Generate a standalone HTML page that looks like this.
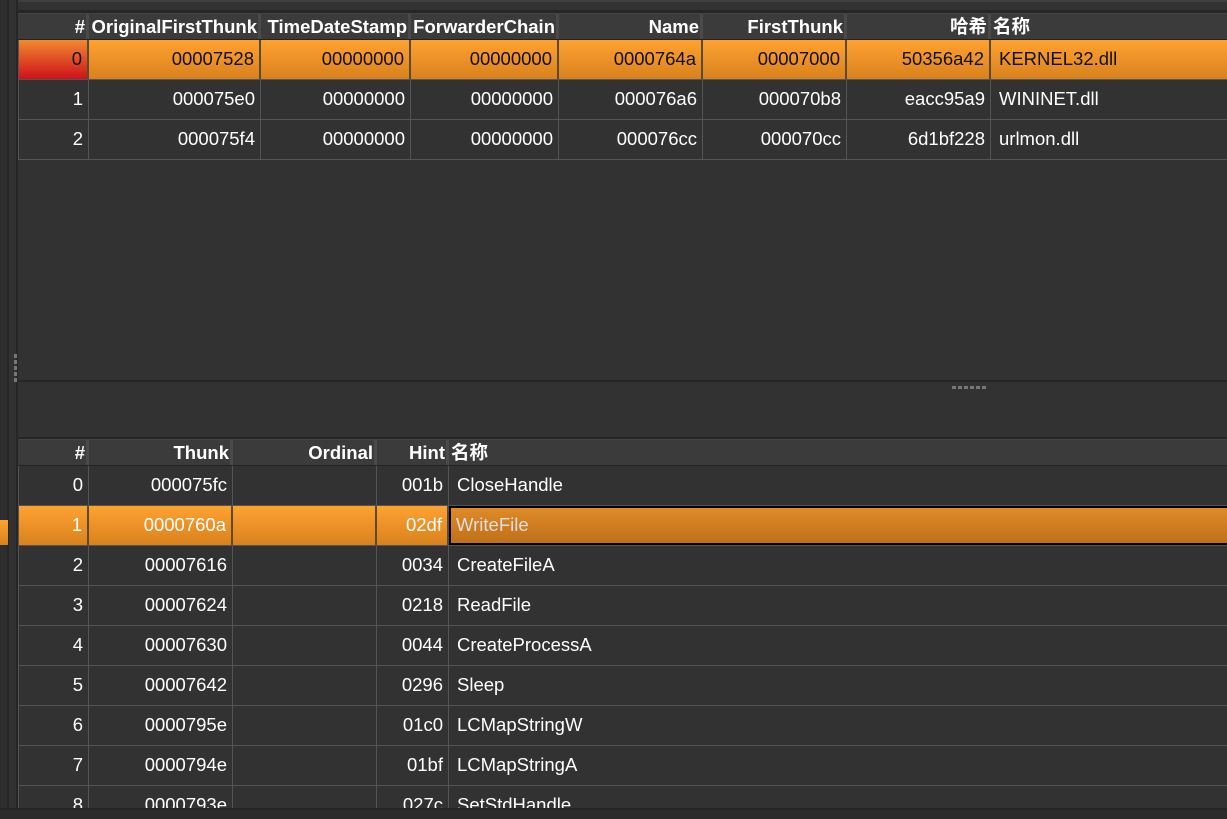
<!DOCTYPE html>
<html style="overflow:hidden;width:1227px;height:819px"><head><meta charset="utf-8"><style>
*{margin:0;padding:0;box-sizing:border-box}
body{width:1227px;height:819px;background:#323232;position:relative;overflow:hidden;font-family:"Liberation Sans","Noto Sans CJK SC",sans-serif;font-size:18.5px;color:#fff}
.a{position:absolute}
.hd{position:absolute;height:26px;background:#3b3b3b;font-weight:bold;font-size:18.5px;line-height:26px;border-top:1px solid #444}
.hc{position:absolute;top:0;height:26px;text-align:right;padding-right:1px;white-space:nowrap;overflow:hidden}
.hc.s{border-right:3px solid #4a4a4a}
.r{position:absolute;height:40px;left:0;right:0;border-bottom:1px solid #555}
.c{position:absolute;top:0;height:39px;line-height:38px;border-right:1px solid #555;text-align:right;padding-right:5px;white-space:nowrap}
.c.l{text-align:left;padding-left:8px;border-right:none!important}
.sel{background:linear-gradient(#ffa232,#d9811c);color:#111}
.sel .c{border-right:2px solid #5a4a38}
</style></head><body>
<div class="a" style="left:0;top:0;width:7px;height:819px;background:#2e2e2e"></div>
<div class="a" style="left:7px;top:0;width:2px;height:819px;background:#262626"></div>
<div class="a" style="left:16px;top:0;width:2px;height:810px;background:#262626"></div>
<div class="a" style="left:18px;top:0;width:1209px;height:2px;background:#404040"></div>
<div class="a" style="left:18px;top:10px;width:1209px;height:3px;background:#262626"></div>
<div class="a" style="left:0;top:520px;width:8px;height:25px;background:linear-gradient(#ffa232,#d9811c)"></div>
<div class="a" style="left:14px;top:354px;width:3px;height:30px;background:repeating-linear-gradient(#777 0 4px,transparent 4px 6px)"></div>
<div class="a" style="left:18px;top:380px;width:1209px;height:2px;background:#262626"></div>
<div class="a" style="left:952px;top:386px;width:35px;height:3px;background:repeating-linear-gradient(90deg,#777 0 4px,transparent 4px 6px)"></div>

<div class="hd" style="left:18px;top:13px;right:0">
<div class="hc s" style="left:0;width:71px">#</div>
<div class="hc s" style="left:71px;width:172px">OriginalFirstThunk</div>
<div class="hc s" style="left:243px;width:150px">TimeDateStamp</div>
<div class="hc s" style="left:393px;width:148px">ForwarderChain</div>
<div class="hc s" style="left:541px;width:144px">Name</div>
<div class="hc s" style="left:685px;width:144px">FirstThunk</div>
<div class="hc s" style="left:829px;width:144px">哈希</div>
<div class="hc" style="left:975px;text-align:left">名称</div>
</div>
<div class="a" style="left:18px;top:39px;right:0;height:1px;background:#222"></div>

<div class="a" style="left:18px;top:40px;right:0;height:120px">
<div class="r sel" style="top:0"><div class="c" style="left:0;width:71px;background:linear-gradient(#f08a30,#d0101a)">0</div><div class="c" style="left:71px;width:172px">00007528</div><div class="c" style="left:243px;width:150px">00000000</div><div class="c" style="left:393px;width:148px">00000000</div><div class="c" style="left:541px;width:144px">0000764a</div><div class="c" style="left:685px;width:144px">00007000</div><div class="c" style="left:829px;width:144px">50356a42</div><div class="c l" style="left:973px">KERNEL32.dll</div></div>
<div class="r" style="top:40px"><div class="c" style="left:0;width:71px">1</div><div class="c" style="left:71px;width:172px">000075e0</div><div class="c" style="left:243px;width:150px">00000000</div><div class="c" style="left:393px;width:148px">00000000</div><div class="c" style="left:541px;width:144px">000076a6</div><div class="c" style="left:685px;width:144px">000070b8</div><div class="c" style="left:829px;width:144px">eacc95a9</div><div class="c l" style="left:973px">WININET.dll</div></div>
<div class="r" style="top:80px"><div class="c" style="left:0;width:71px">2</div><div class="c" style="left:71px;width:172px">000075f4</div><div class="c" style="left:243px;width:150px">00000000</div><div class="c" style="left:393px;width:148px">00000000</div><div class="c" style="left:541px;width:144px">000076cc</div><div class="c" style="left:685px;width:144px">000070cc</div><div class="c" style="left:829px;width:144px">6d1bf228</div><div class="c l" style="left:973px">urlmon.dll</div></div>
</div>
<div class="a" style="left:18px;top:40px;width:1px;height:119px;background:#555"></div>

<div class="a" style="left:18px;top:437px;right:0;height:2px;background:#262626"></div>
<div class="hd" style="left:18px;top:439px;right:0">
<div class="hc s" style="left:0;width:71px">#</div>
<div class="hc s" style="left:71px;width:144px">Thunk</div>
<div class="hc s" style="left:215px;width:144px">Ordinal</div>
<div class="hc s" style="left:359px;width:72px">Hint</div>
<div class="hc" style="left:433px;text-align:left">名称</div>
</div>
<div class="a" style="left:18px;top:465px;right:0;height:1px;background:#222"></div>
<div class="a" style="left:18px;top:466px;right:0;height:342px;overflow:hidden" id="bw"><div id="b"></div></div>
<div class="a" style="left:18px;top:466px;width:1px;height:342px;background:#555"></div>
<script>
var d=[["0","000075fc","001b","CloseHandle"],["1","0000760a","02df","WriteFile"],["2","00007616","0034","CreateFileA"],["3","00007624","0218","ReadFile"],["4","00007630","0044","CreateProcessA"],["5","00007642","0296","Sleep"],["6","0000795e","01c0","LCMapStringW"],["7","0000794e","01bf","LCMapStringA"],["8","0000793e","027c","SetStdHandle"]];
var h="";d.forEach(function(r,i){var s=i==1;h+='<div class="r'+(s?' sel':'')+'" style="top:'+(i*40)+'px;'+(s?'color:#fff':'')+'"><div class="c" style="left:0;width:71px">'+r[0]+'</div><div class="c" style="left:71px;width:144px">'+r[1]+'</div><div class="c" style="left:215px;width:144px"></div><div class="c" style="left:359px;width:72px">'+r[2]+'</div><div class="c l" style="left:431px;'+(s?'right:0;border:2px solid #000;background:linear-gradient(#de8a28,#c0701a);color:#ddd;line-height:34px;padding-left:5px':'')+'">'+r[3]+'</div></div>';});
document.getElementById("b").outerHTML=h;
</script>
<div class="a" style="left:0;top:808px;width:1227px;height:11px;background:#2b2b2b;border-top:2px solid #262626"></div>
</body></html>
